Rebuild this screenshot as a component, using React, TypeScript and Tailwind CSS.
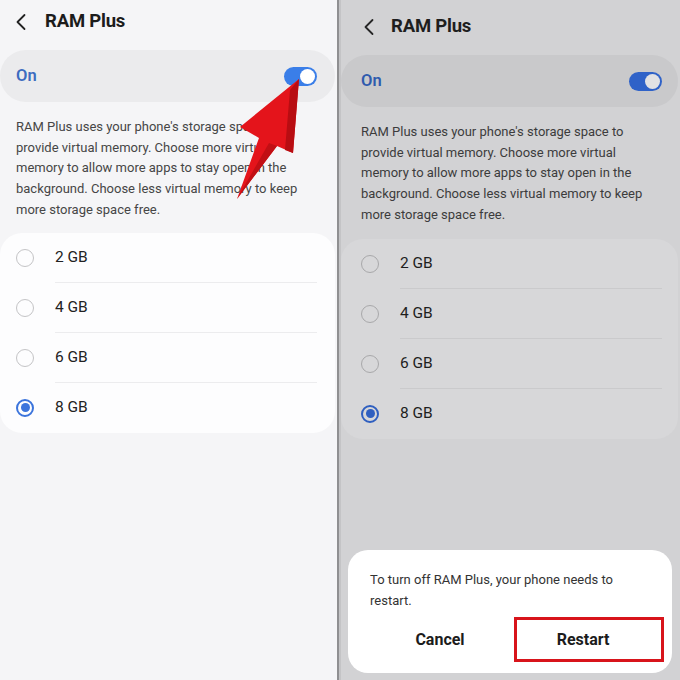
import React from "react";

const font = { fontFamily: "Roboto, 'Noto Sans', Arial, sans-serif" };

function Chevron({ color }: { color: string }) {
  return (
    <svg width="12" height="18" viewBox="0 0 12 18" fill="none">
      <path d="M9.5 2 L2.5 9 L9.5 16" stroke={color} strokeWidth="1.8" strokeLinecap="round" strokeLinejoin="round" />
    </svg>
  );
}

function Radio({ checked, dim }: { checked: boolean; dim: boolean }) {
  if (checked) {
    return (
      <div className={`w-[18px] h-[18px] rounded-full border-2 flex items-center justify-center ${dim ? "border-[#2f5fc0]" : "border-[#3b74dc]"}`}>
        <div className={`w-[9px] h-[9px] rounded-full ${dim ? "bg-[#2f5fc0]" : "bg-[#3b74dc]"}`} />
      </div>
    );
  }
  return <div className={`w-[18px] h-[18px] rounded-full border-[1.5px] ${dim ? "border-[#a8a8aa]" : "border-[#c4c4c6]"}`} />;
}

function Desc() {
  return (
    <>
      RAM Plus uses your phone's storage space to
      <br />
      provide virtual memory. Choose more virtual
      <br />
      memory to allow more apps to stay open in the
      <br />
      background. Choose less virtual memory to keep
      <br />
      more storage space free.
    </>
  );
}

function LeftPanel() {
  const opts = ["2 GB", "4 GB", "6 GB", "8 GB"];
  return (
    <div className="relative w-[337px] h-[680px] bg-[#f5f5f7] shrink-0 overflow-hidden">
      <div className="h-[44px] flex items-center pl-[15px]">
        <Chevron color="#222" />
        <span className="ml-[18px] text-[18.5px] font-bold text-[#1c1c1c] tracking-[-0.2px]">RAM Plus</span>
      </div>
      <div className="mt-[6px] h-[52px] w-[335px] rounded-[26px] bg-[#ebebed] flex items-center justify-between pl-[16px] pr-[18px]">
        <span className="text-[16.5px] font-semibold text-[#3d6cc0]">On</span>
        <div className="w-[33px] h-[19px] rounded-full bg-[#3a7ee8] flex items-center justify-end pr-[2px]">
          <div className="w-[15px] h-[15px] rounded-full bg-white" />
        </div>
      </div>
      <p className="mt-[15px] pl-[16px] whitespace-nowrap text-[13px] leading-[20.7px] text-[#464646]">
        <Desc />
      </p>
      <div className="mt-[12px] w-[335px] rounded-[22px] bg-[#fdfdfe]">
        {opts.map((o, i) => (
          <div key={o} className="h-[50px] flex items-center relative">
            <div className="w-[55px] flex justify-center pr-[5px]">
              <Radio checked={i === 3} dim={false} />
            </div>
            <span className="text-[15.5px] text-[#222]">{o}</span>
            {i < 3 && <div className="absolute bottom-0 left-[55px] w-[262px] h-px bg-[#ececee]" />}
          </div>
        ))}
      </div>
      <svg className="absolute left-0 top-0" width="337" height="680" viewBox="0 0 337 680">
        <polygon points="299,79 293,153 277,146 237,199 259,138 240,127" fill="#e4141b" />
        <polygon points="299,79 293,153 285,150 290,90" fill="#b80d12" />
        <polygon points="277,146 237,199 269,143" fill="#c10f14" />
      </svg>
    </div>
  );
}

function RightPanel() {
  const opts = ["2 GB", "4 GB", "6 GB", "8 GB"];
  return (
    <div className="relative flex-1 h-[680px] bg-[#d2d2d4] overflow-hidden">
      <div className="h-[52px] flex items-center pl-[22px] pt-[2px]">
        <Chevron color="#262626" />
        <span className="ml-[16px] text-[18.5px] font-bold text-[#1e1e1e] tracking-[-0.2px]">RAM Plus</span>
      </div>
      <div className="mt-[3px] h-[52px] w-[337px] rounded-[26px] bg-[#c9c9cb] flex items-center justify-between pl-[20px] pr-[16px]">
        <span className="text-[16.5px] font-semibold text-[#2f5bae]">On</span>
        <div className="w-[33px] h-[19px] rounded-full bg-[#2f62c8] flex items-center justify-end pr-[2px]">
          <div className="w-[15px] h-[15px] rounded-full bg-[#e2e2e4]" />
        </div>
      </div>
      <p className="mt-[15px] pl-[20px] whitespace-nowrap text-[13px] leading-[20.7px] text-[#3c3c3c]">
        <Desc />
      </p>
      <div className="mt-[13px] w-[337px] rounded-[22px] bg-[#d7d7d9]">
        {opts.map((o, i) => (
          <div key={o} className="h-[50px] flex items-center relative">
            <div className="w-[59px] flex justify-center pr-[1px]">
              <Radio checked={i === 3} dim={true} />
            </div>
            <span className="text-[15.5px] text-[#1e1e1e]">{o}</span>
            {i < 3 && <div className="absolute bottom-0 left-[59px] w-[262px] h-px bg-[#cacacc]" />}
          </div>
        ))}
      </div>
      <div className="absolute left-[7px] top-[550px] w-[324px] h-[123px] rounded-[20px] bg-white">
        <p className="pt-[19px] pl-[22px] text-[13px] leading-[21px] text-[#333]">
          To turn off RAM Plus, your phone needs to
          <br />
          restart.
        </p>
        <div className="absolute left-0 top-[67px] w-full flex items-center">
          <div className="w-[166px] h-[45px] flex items-center justify-center pl-[18px] text-[16px] font-bold text-[#1c1c1c]">Cancel</div>
          <div className="w-[150px] h-[45px] border-[3px] border-[#d8141b] flex items-center justify-center pr-[12px] text-[16px] font-bold text-[#1c1c1c]">
            Restart
          </div>
        </div>
      </div>
    </div>
  );
}

export default function App() {
  return (
    <div className="w-[680px] h-[680px] flex overflow-hidden" style={font}>
      <LeftPanel />
      <div className="w-[2px] h-[680px] bg-[#8f8f91] shrink-0" />
      <div className="w-[2px] h-[680px] bg-[#c4c4c6] shrink-0" />
      <RightPanel />
    </div>
  );
}
